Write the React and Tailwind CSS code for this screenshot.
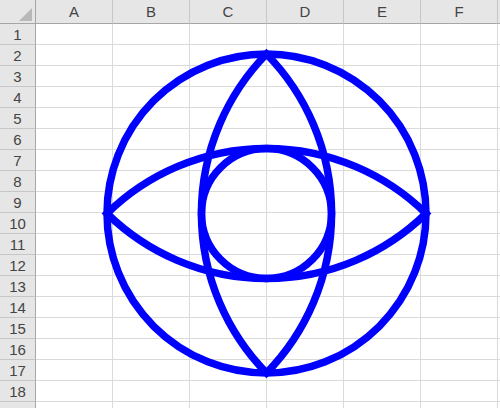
import React from "react";

const COLS = ["A", "B", "C", "D", "E", "F"];
const ROWS = Array.from({ length: 18 }, (_, i) => i + 1);

function CornerCell() {
  return (
    <div className="relative h-[24px] bg-[#e6e6e6] border-r border-b border-[#a6a6a6]">
      <svg className="absolute left-0 top-0" width="36" height="24">
        <polygon points="32,8 32,21 19,21" fill="#b8b8b8" />
      </svg>
    </div>
  );
}

function ColHeader({ label }) {
  return (
    <div className="h-[24px] bg-[#e6e6e6] border-r border-[#c6c6c6] border-b border-b-[#a6a6a6] flex items-center justify-center text-[15px] text-[#444444] leading-none">
      {label}
    </div>
  );
}

function RowHeader({ n }) {
  return (
    <div className="h-[21px] bg-[#e6e6e6] border-r border-r-[#a6a6a6] border-b border-[#c6c6c6] flex items-center justify-center text-[15px] text-[#444444] leading-none">
      {n}
    </div>
  );
}

function Cell() {
  return <div className="h-[21px] bg-white border-r border-b border-[#dadada]" />;
}

function SheetRow({ n }) {
  return (
    <>
      <RowHeader n={n} />
      {COLS.map((c) => (
        <Cell key={c} />
      ))}
      <div className="h-[21px] bg-white border-b border-[#dadada]" />
    </>
  );
}

// Blue figure: outer circle, two crossing lens shapes and an inner circle.
function Figure() {
  const cx = 266.5;
  const cy = 213.5;
  const R = 159.5;
  const r = 65;
  const lensR = 228;
  const top = cy - R;
  const bottom = cy + R;
  const left = cx - R;
  const right = cx + R;
  return (
    <svg
      className="absolute left-0 top-0 pointer-events-none"
      width="500"
      height="408"
      viewBox="0 0 500 408"
    >
      <g fill="none" stroke="#0000ff" strokeWidth="7.5" strokeLinejoin="miter">
        <circle cx={cx} cy={cy} r={R} />
        <circle cx={cx} cy={cy} r={r} />
        <path d={`M ${cx} ${top} A ${lensR} ${lensR} 0 0 0 ${cx} ${bottom} A ${lensR} ${lensR} 0 0 0 ${cx} ${top} Z`} />
        <path d={`M ${left} ${cy} A ${lensR} ${lensR} 0 0 1 ${right} ${cy} A ${lensR} ${lensR} 0 0 1 ${left} ${cy} Z`} />
      </g>
    </svg>
  );
}

export default function App() {
  return (
    <div
      className="relative w-[500px] h-[408px] overflow-hidden bg-white"
      style={{ fontFamily: '"Liberation Sans", Arial, sans-serif' }}
    >
      <div className="grid grid-cols-[36px_repeat(6,77px)_2px]">
        <CornerCell />
        {COLS.map((c) => (
          <ColHeader key={c} label={c} />
        ))}
        <div className="h-[24px] bg-[#e6e6e6] border-b border-[#a6a6a6]" />
        {ROWS.map((n) => (
          <SheetRow key={n} n={n} />
        ))}
        <SheetRow n="" />
      </div>
      <Figure />
    </div>
  );
}
